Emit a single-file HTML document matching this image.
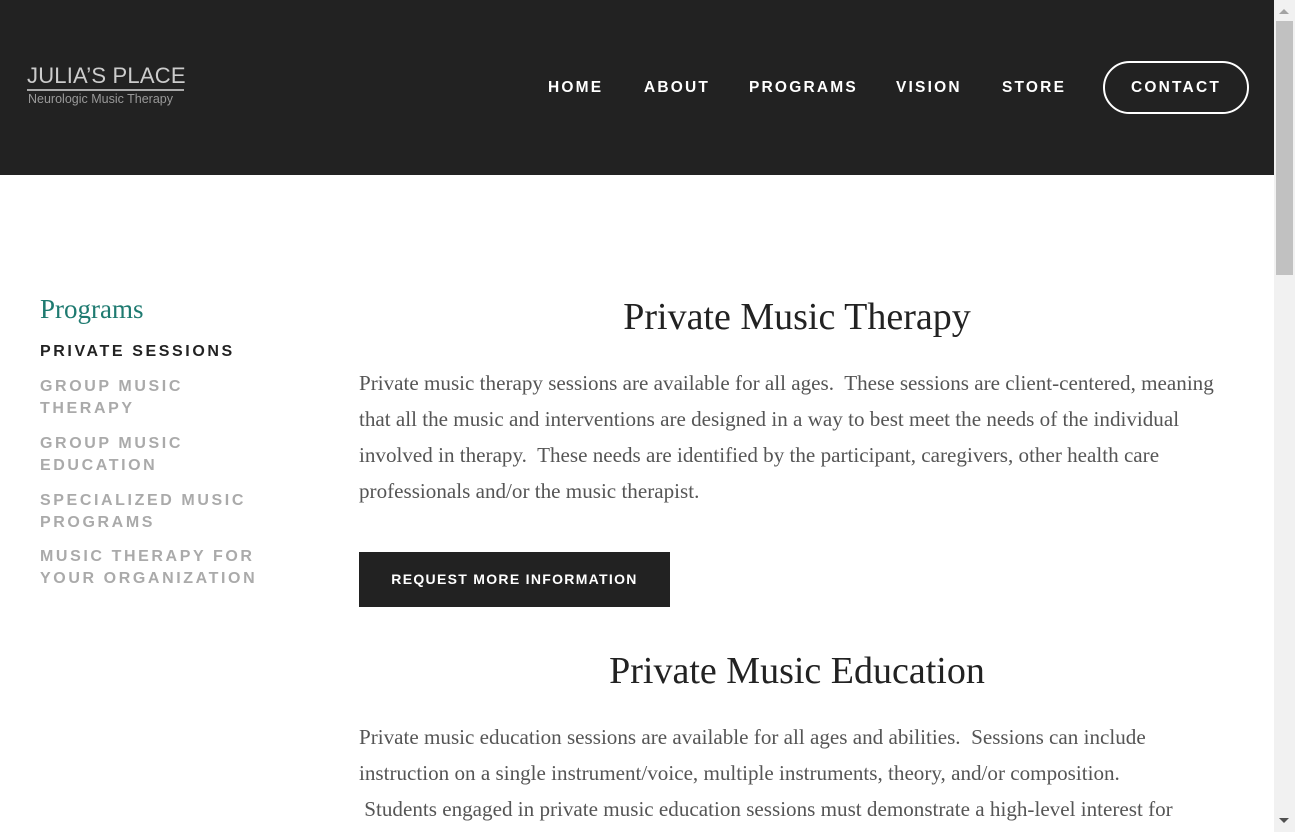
<!DOCTYPE html>
<html><head><style>
*{margin:0;padding:0;box-sizing:border-box}
html,body{width:1295px;height:832px;overflow:hidden;background:#fff}
body{position:relative;font-family:"Liberation Sans",sans-serif}
.hdr{position:absolute;left:0;top:0;width:1274px;height:175px;background:#222}
.logo1{position:absolute;left:27px;top:63px;color:#ccc;font-size:22px;letter-spacing:0.2px;line-height:26px}
.logo-line{position:absolute;left:27px;top:89px;width:157px;height:2px;background:#aaa}
.logo2{position:absolute;left:28px;top:92px;color:#999;font-size:12.5px}
.nav{position:absolute;top:79px;color:#fff;font-weight:bold;font-size:15.5px;letter-spacing:2.2px}
.cbtn{position:absolute;left:1103px;top:61px;width:146px;height:53px;border:2px solid #fff;border-radius:27px;color:#fff;font-weight:bold;font-size:15.5px;letter-spacing:2.2px;text-align:center;line-height:49px}
.side{position:absolute;left:40px}
.sb{font-weight:bold;font-size:16px;letter-spacing:2.6px;line-height:22px;color:#aaa}
.serif{font-family:"Liberation Serif",serif}
h1{position:absolute;left:359px;width:876px;text-align:center;font-weight:normal;font-size:38px;color:#222}
p.b{position:absolute;left:359px;width:880px;font-size:21.1px;line-height:36px;color:#555}
.btn{position:absolute;left:359px;top:552px;width:311px;height:55px;background:#222;color:#fff;font-weight:bold;font-size:14px;letter-spacing:1.3px;text-align:center;line-height:55px}
.sbar{position:absolute;left:1274px;top:0;width:21px;height:832px;background:#f1f1f1}
.thumb{position:absolute;left:1276px;top:21px;width:17px;height:254px;background:#c1c1c1}
</style></head><body>
<div class="hdr">
<div class="logo1">JULIA’S PLACE</div>
<div class="logo-line"></div>
<div class="logo2">Neurologic Music Therapy</div>
<div class="nav" style="left:548px">HOME</div>
<div class="nav" style="left:644px">ABOUT</div>
<div class="nav" style="left:749px">PROGRAMS</div>
<div class="nav" style="left:896px">VISION</div>
<div class="nav" style="left:1002px">STORE</div>
<div class="cbtn">CONTACT</div>
</div>
<div class="side serif" style="top:294px;font-size:27px;color:#1e7a70">Programs</div>
<div class="side sb" style="top:341px;color:#222">PRIVATE SESSIONS</div>
<div class="side sb" style="top:376px">GROUP MUSIC<br>THERAPY</div>
<div class="side sb" style="top:433px">GROUP MUSIC<br>EDUCATION</div>
<div class="side sb" style="top:490px">SPECIALIZED MUSIC<br>PROGRAMS</div>
<div class="side sb" style="top:546px">MUSIC THERAPY FOR<br>YOUR ORGANIZATION</div>
<h1 class="serif" style="top:295px">Private Music Therapy</h1>
<p class="b serif" style="top:365px">Private music therapy sessions are available for all ages.&nbsp; These sessions are client-centered, meaning<br>that all the music and interventions are designed in a way to best meet the needs of the individual<br>involved in therapy.&nbsp; These needs are identified by the participant, caregivers, other health care<br>professionals and/or the music therapist.</p>
<div class="btn">REQUEST MORE INFORMATION</div>
<h1 class="serif" style="top:649px">Private Music Education</h1>
<p class="b serif" style="top:719px">Private music education sessions are available for all ages and abilities.&nbsp; Sessions can include<br>instruction on a single instrument/voice, multiple instruments, theory, and/or composition.<br>&nbsp;Students engaged in private music education sessions must demonstrate a high-level interest for</p>
<div class="sbar"></div><div class="thumb"></div>
<div style="position:absolute;left:1279px;top:9px;width:0;height:0;border-left:5px solid transparent;border-right:5px solid transparent;border-bottom:5px solid #a3a3a3"></div>
<div style="position:absolute;left:1279px;top:818px;width:0;height:0;border-left:5px solid transparent;border-right:5px solid transparent;border-top:5px solid #505050"></div>
</body></html>
